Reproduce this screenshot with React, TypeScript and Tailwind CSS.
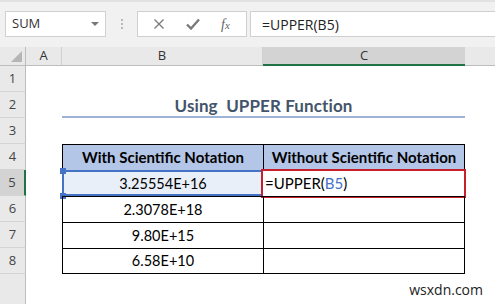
import { ReactNode } from "react";

const ui = { fontFamily: '"Open Sans", "Noto Sans", sans-serif' };
const cell = { fontFamily: 'Lato, "Open Sans", sans-serif' };

const rows = [
  { n: 1 },
  { n: 2 },
  { n: 3 },
  { n: 4 },
  { n: 5, b: "3.25554E+16" },
  { n: 6, b: "2.3078E+18" },
  { n: 7, b: "9.80E+15" },
  { n: 8, b: "6.58E+10" },
];

function RowHead({ n, active }: { n: number; active?: boolean }) {
  return (
    <div
      className={`w-[26px] shrink-0 h-full flex items-center justify-center text-[13px] text-[#444] border-b border-[#d4d4d4] ${
        active ? "bg-[#d3d3d3] border-r-2 border-r-[#217346]" : "bg-[#e9e9e9] border-r border-r-[#bdbdbd]"
      }`}
      style={ui}
    >
      {n}
    </div>
  );
}

function Row({ n, children, active }: { n: number; children?: ReactNode; active?: boolean }) {
  return (
    <div className="flex h-[26px]">
      <RowHead n={n} active={active} />
      <div className="w-[36px] shrink-0" />
      {children}
    </div>
  );
}

export default function App() {
  return (
    <div className="w-[495px] h-[304px] overflow-hidden bg-white flex flex-col">
      {/* formula bar */}
      <div className="h-[47px] bg-[#f1f1f1] border-t-2 border-[#e2e2e2] flex items-start pt-[9px] pl-[5px]">
        <div className="w-[101px] h-[26px] bg-white border border-[#d0d0d0] flex items-center pl-[6px] pr-[6px] justify-between">
          <span className="text-[13px] text-[#333]" style={ui}>SUM</span>
          <span className="w-0 h-0 border-l-[4px] border-r-[4px] border-t-[4px] border-l-transparent border-r-transparent border-t-[#777]" />
        </div>
        <div className="w-[31px] h-[26px] flex flex-col items-center justify-center gap-[2px]">
          <span className="w-[2px] h-[2px] bg-[#b8b8b8]" />
          <span className="w-[2px] h-[2px] bg-[#b8b8b8]" />
          <span className="w-[2px] h-[2px] bg-[#b8b8b8]" />
        </div>
        <div className="w-[110px] h-[26px] bg-white border border-[#d0d0d0] flex items-center">
          <svg width="12" height="12" viewBox="0 0 12 12" className="ml-[15px]">
            <path d="M1.5 1.5L10.5 10.5M10.5 1.5L1.5 10.5" stroke="#7a7a7a" strokeWidth="1.3" />
          </svg>
          <svg width="14" height="12" viewBox="0 0 14 12" className="ml-[21px]">
            <path d="M1 6.5L5 10.5L13 1.5" stroke="#7a7a7a" strokeWidth="2.4" fill="none" />
          </svg>
          <span className="ml-[21px] text-[14px] italic text-[#666]" style={{ fontFamily: '"Liberation Serif", serif' }}>
            f<span className="text-[11px]">x</span>
          </span>
        </div>
        <div className="ml-[3px] flex-1 h-[26px] bg-white border border-[#d0d0d0] border-r-0 flex items-center pl-[11px]">
          <span className="text-[14px] text-[#222]" style={ui}>=UPPER(B5)</span>
        </div>
      </div>

      {/* column headers */}
      <div className="flex h-[19px] bg-[#e9e9e9] text-[13px] text-[#333]" style={ui}>
        <div className="w-[26px] shrink-0 border-r border-[#bdbdbd] border-b border-b-[#bdbdbd] flex items-end justify-end p-[3px]">
          <span className="w-0 h-0 border-b-[11px] border-l-[11px] border-l-transparent border-b-[#b5b5b5]" />
        </div>
        <div className="w-[36px] shrink-0 border-r border-[#cfcfcf] border-b border-b-[#bdbdbd] flex items-center justify-center">A</div>
        <div className="w-[201px] shrink-0 border-r border-[#cfcfcf] border-b border-b-[#bdbdbd] flex items-center justify-center">B</div>
        <div className="w-[202px] shrink-0 bg-[#d3d3d3] border-b-2 border-[#217346] flex items-center justify-center">C</div>
        <div className="flex-1 border-b border-[#bdbdbd]" />
      </div>

      {/* sheet */}
      <div className="flex-1 flex flex-col relative">
        <Row n={1} />
        <Row n={2}>
          <div className="w-[403px] shrink-0 border-b-2 border-[#9fb3d8] flex items-center justify-center pt-[3px]">
            <span className="text-[17px] font-bold text-[#44546a] tracking-[0.1px]" style={cell}>
              Using&nbsp; UPPER Function
            </span>
          </div>
        </Row>
        <Row n={3} />
        <Row n={4}>
          <div className="w-[201px] shrink-0 bg-[#b4c6e7] border-l border-t border-black flex items-center justify-center text-[15px] font-bold text-black" style={cell}>
            With Scientific Notation
          </div>
          <div className="w-[202px] shrink-0 bg-[#b4c6e7] border-l border-r border-t border-black flex items-center justify-center text-[15px] font-bold text-black" style={cell}>
            Without Scientific Notation
          </div>
        </Row>
        {rows.slice(4).map((r) => (
          <Row key={r.n} n={r.n} active={r.n === 5}>
            <div
              className={`relative w-[201px] shrink-0 border-l border-t border-black flex items-center justify-center text-[14.5px] text-black ${
                r.n === 8 ? "border-b" : ""
              } ${r.n === 5 ? "bg-[#e9eff8]" : ""}`}
              style={cell}
            >
              {r.b}
              {r.n === 5 && (
                <>
                  <div className="absolute -left-[1px] -top-[1px] -right-[1px] bottom-0 border-2 border-[#4472c4] border-r-0" />
                  <div className="absolute -left-[3px] -top-[3px] w-[6px] h-[6px] bg-[#4472c4]" />
                  <div className="absolute -left-[3px] -bottom-[3px] w-[6px] h-[6px] bg-[#4472c4]" />
                </>
              )}
            </div>
            <div
              className={`relative w-[202px] shrink-0 border-l border-r border-t border-black flex items-center text-[15px] text-black ${
                r.n === 8 ? "border-b" : ""
              }`}
              style={cell}
            >
              {r.n === 5 && (
                <>
                  <div className="absolute -left-[3px] -top-[2px] -right-[2px] -bottom-[2px] border-[2.5px] border-[#c8202a] bg-white" />
                  <span className="relative pl-[1px]">
                    =UPPER(<span className="text-[#4472c4]">B5</span>)
                  </span>
                </>
              )}
            </div>
          </Row>
        ))}
        <div className="flex flex-1">
          <div className="w-[26px] shrink-0 bg-[#e9e9e9] border-r border-[#bdbdbd]" />
        </div>
        <span className="absolute right-[12px] bottom-[4px] text-[14px] text-[#222]" style={ui}>
          wsxdn.com
        </span>
      </div>
    </div>
  );
}
